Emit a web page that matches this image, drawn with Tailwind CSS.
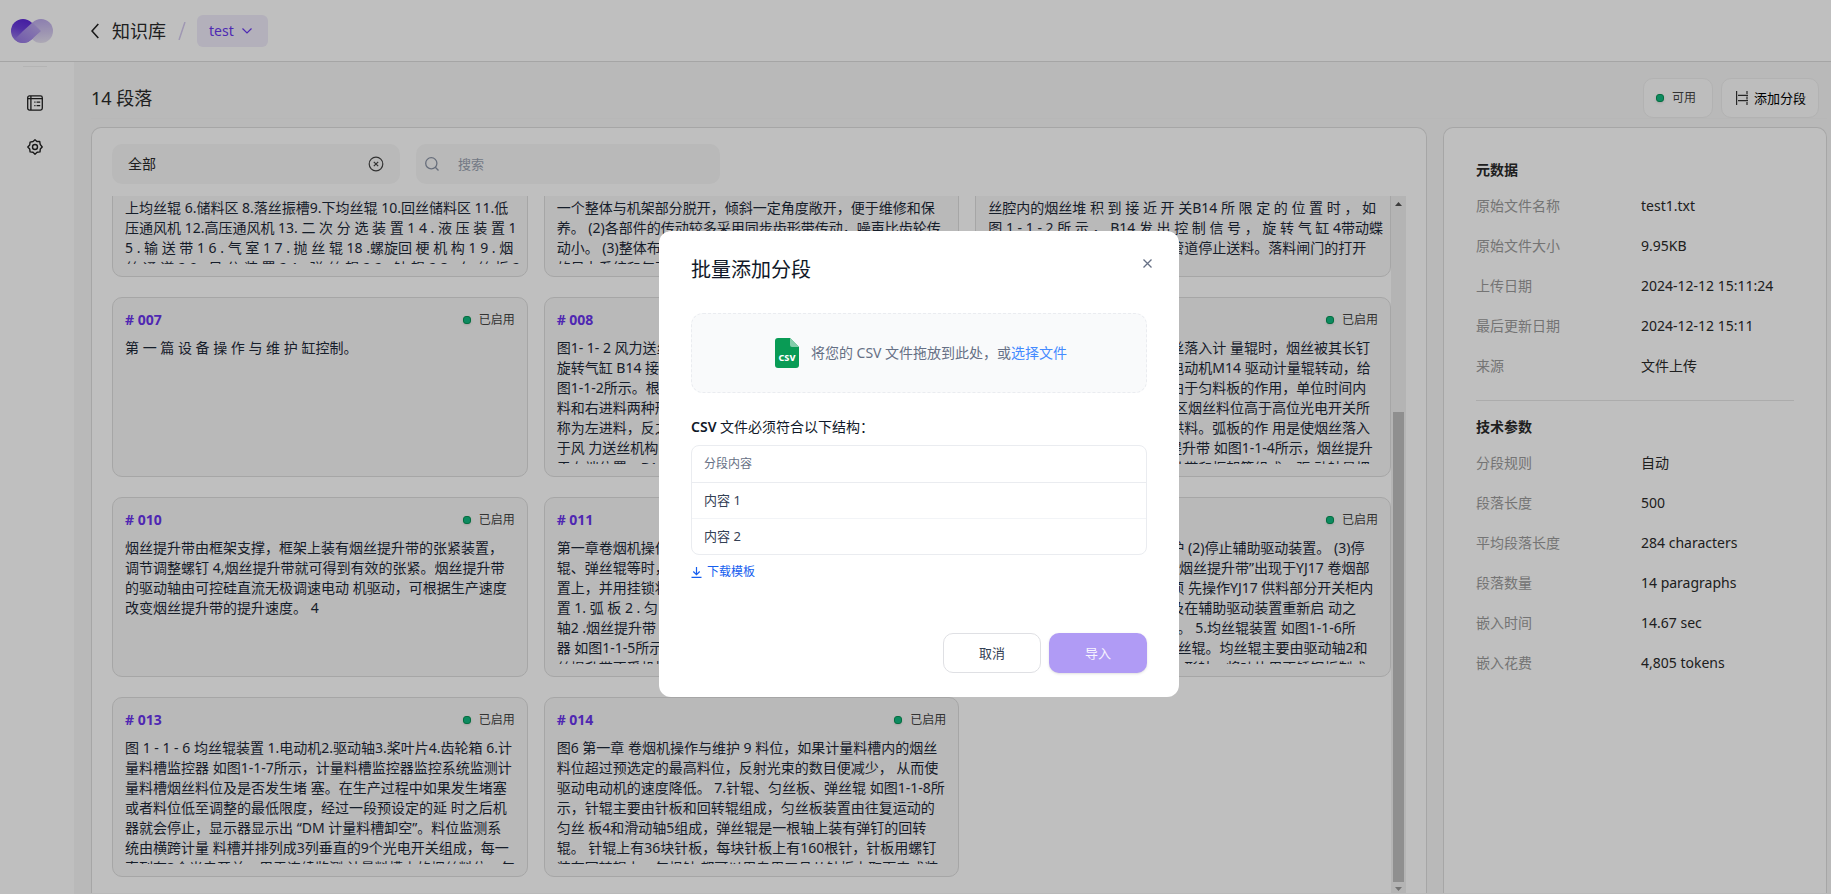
<!DOCTYPE html>
<html lang="zh-CN">
<head>
    <meta charset="UTF-8">
    <meta name="viewport" content="width=device-width, initial-scale=1.0">
    <title>知识库 - test</title>
    <script src="https://cdn.jsdelivr.net/npm/@tailwindcss/browser@4"></script>
</head>
<body class="h-screen overflow-hidden flex flex-col bg-white text-[#2a2a2a] text-sm font-['Noto_Sans','Noto_Sans_CJK_SC',sans-serif]">
    <header class="h-[62px] shrink-0 flex items-center border-b border-[#dcdcdc] pl-[11px]">
        <svg class="w-[42px] h-6" viewBox="0 0 42 24">
            <defs>
                <linearGradient id="izq" x1="0.7" y1="0" x2="0.4" y2="1">
                    <stop offset="0" stop-color="#5a25d8"/><stop offset="0.45" stop-color="#6c3fdc"/><stop offset="1" stop-color="#9c80e6"/>
                </linearGradient>
                <linearGradient id="der" x1="0.4" y1="0" x2="0.5" y2="1">
                    <stop offset="0" stop-color="#bba9ea"/><stop offset="0.6" stop-color="#d3c8ee"/><stop offset="1" stop-color="#e6e1f1"/>
                </linearGradient>
                <linearGradient id="banda" x1="0" y1="1" x2="1" y2="0">
                    <stop offset="0" stop-color="#9474e4"/><stop offset="1" stop-color="#c0afec"/>
                </linearGradient>
            </defs>
            <circle cx="30" cy="12" r="12" fill="url(#der)"/>
            <circle cx="12" cy="12" r="12" fill="url(#izq)"/>
            <path d="M12 12 21.500 3.500 30 12 20.500 20.500A12 12 0 0 1 3.500 20.500z" fill="url(#banda)"/>
        </svg>
        <a href="#" class="ml-[38px] flex items-center gap-[13px] text-lg">
            <svg class="w-2 h-4" viewBox="0 0 8 16" fill="none" stroke="#222" stroke-width="1.6"><path d="M7.300 1 1 8l6.300 7"/></svg>
            <span>知识库</span>
        </a>
        <svg class="ml-3 w-2 h-[18px]" viewBox="0 0 8 18" stroke="#d5cbef" stroke-width="1.5"><path d="M7 0 1 18"/></svg>
        <button class="ml-[11px] h-8 px-3 rounded-md bg-[#efebfa] text-[#6938ef] flex items-center gap-2 w-[71px]">
            <span>test</span>
            <svg class="w-[10px] h-[6px] shrink-0" viewBox="0 0 10 6" fill="none" stroke="#6938ef" stroke-width="1.200"><path d="m.5.5 4.500 4.500L9.500.5"/></svg>
        </button>
    </header>

    <div class="flex-1 min-h-0 flex">
        <nav class="w-[74px] shrink-0 flex flex-col items-start pt-1">
            <div class="ml-[23px] w-6 h-px bg-[#f0f0f0]"></div>
            <a href="#" aria-label="段落" class="ml-[27px] mt-7">
                <svg class="w-4 h-4" viewBox="0 0 16 16" fill="none" stroke="#222" stroke-width="1.300">
                    <rect x=".7" y=".9" width="14.600" height="14.200" rx="1.800"/>
                    <path d="M3.900.9v14.200M.7 3.600h14.600M7.300 7.200h1.200M9.600 7.200h3.600M7.300 10.600h1.200M9.600 10.600h3.600"/>
                </svg>
            </a>
            <a href="#" aria-label="设置" class="ml-[27px] mt-7">
                <svg class="w-4 h-4" viewBox="0 0 16 16" fill="none" stroke="#222" stroke-width="1.400" stroke-linejoin="round">
                    <path d="M8 .8 9.900 2.500l2.800-.1.5 2.900L15.200 8l-1.900 2-.3 2.900-2.900.4L8 15.200l-2-1.900-2.900-.4-.4-2.900L.8 8l1.900-2 .4-2.900 3-.6z"/>
                    <circle cx="8" cy="8" r="2.500"/>
                </svg>
            </a>
        </nav>

        <main class="flex-1 min-w-0 bg-[#f7f7f7] pl-[17px] pr-1 pt-4 pb-px flex flex-col">
            <div class="h-[41px] shrink-0 flex items-start justify-between border-b border-[#f4f4f4] pr-2">
                <h1 class="text-lg leading-10">14 段落</h1>
                <div class="flex gap-2">
                    <div class="h-10 w-[70px] flex items-center gap-2 pl-3 rounded-[10px] border border-[#eee] bg-[#fcfcfc] text-xs text-[#444]">
                        <span class="size-2 rounded-[3px] bg-[#10b981] border border-[#079455] shadow-sm"></span>可用
                    </div>
                    <button class="h-10 w-[98px] flex items-center gap-[6px] pl-[14px] rounded-[10px] border border-[#eee] bg-[#fcfcfc] text-[13px] text-black whitespace-nowrap">
                        <svg class="w-3 h-[14px] shrink-0" viewBox="0 0 12 14" fill="none" stroke="#333" stroke-width="1.200"><path d="M.6 0v14M2 4.400h10M2 9.600h10M11 0v3M11 5.500v3M11 11v3"/></svg>
                        添加分段
                    </button>
                </div>
            </div>

            <div class="mt-2 flex-1 min-h-0 flex gap-4">
                <section class="flex-1 min-w-0 rounded-t-[10px] border border-b-0 border-[#dedede] bg-white px-5 pt-4 flex flex-col">
                    <div class="flex gap-4 shrink-0">
                        <div class="relative w-72">
                            <select aria-label="状态" class="appearance-none w-full h-10 rounded-[10px] bg-[#f7f7f7] px-4 text-sm text-[#2a2a2a]">
                                <option>全部</option>
                            </select>
                            <button aria-label="清除" class="absolute right-4 top-3">
                                <svg class="size-4" viewBox="0 0 16 16" fill="none" stroke="#444" stroke-width="1.200"><circle cx="8" cy="8" r="6.800"/><path d="m5.800 5.800 4.400 4.400M10.200 5.800l-4.400 4.400"/></svg>
                            </button>
                        </div>
                        <label class="flex items-center gap-[15px] w-[304px] h-10 rounded-[10px] bg-[#f7f7f7] pl-[9px]">
                            <svg class="size-[14px] shrink-0" viewBox="0 0 14 14" fill="none" stroke="#8a93a5" stroke-width="1.300"><circle cx="6.300" cy="6.300" r="5.600"/><path d="m10.300 10.300 3.200 3.200"/></svg>
                            <input type="text" aria-label="搜索" placeholder="搜索" class="flex-1 min-w-0 bg-transparent px-1 text-[13px] placeholder:text-[#9aa2b1] outline-none">
                        </label>
                    </div>
                    <div class="mt-3 flex-1 min-h-0 flex">
                        <div class="flex-1 min-w-0 overflow-hidden flex flex-col justify-end pb-4">
                            <div id="cards" class="shrink-0 grid grid-cols-3 gap-x-4 gap-y-5"></div>
                        </div>
                        <div class="w-[15px] shrink-0 bg-[#f1f1f1] flex flex-col items-center">
                            <svg class="mt-[6px] w-[7px] h-1" viewBox="0 0 7 4" fill="#505050"><path d="M0 4 3.500 0 7 4z"/></svg>
                            <div class="flex-1"></div>
                            <div class="w-[11px] h-[470px] bg-[#bfbfbf]"></div>
                            <svg class="mt-[5px] mb-[2px] w-[7px] h-1" viewBox="0 0 7 4" fill="#999"><path d="M0 0h7L3.500 4z"/></svg>
                        </div>
                    </div>
                </section>

                <aside class="w-96 shrink-0 rounded-t-[10px] border border-b-0 border-[#dedede] bg-white px-8 pt-8">
                    <h2 class="font-bold leading-5">元数据</h2>
                    <dl id="meta" class="mt-4 grid grid-cols-[165px_1fr] gap-y-5 leading-5"></dl>
                    <hr class="mt-6 border-[#e6e6e6]">
                    <h2 class="mt-4 font-bold leading-5">技术参数</h2>
                    <dl id="tech" class="mt-4 grid grid-cols-[165px_1fr] gap-y-5 leading-5"></dl>
                </aside>
            </div>
        </main>
    </div>

    <div class="fixed inset-0 bg-black/25 flex items-center justify-center pl-[7px] pt-[34px]">
        <div role="dialog" aria-labelledby="dialogTitle" class="relative w-[520px] rounded-xl bg-white px-8 pt-6 pb-6 text-[#101828]">
            <h2 id="dialogTitle" class="text-xl leading-[30px]">批量添加分段</h2>
            <button aria-label="关闭" class="absolute right-6 top-6 size-4 flex items-center justify-center">
                <svg class="size-[9px]" viewBox="0 0 9 9" stroke="#667085" stroke-width="1.300"><path d="m.5.500 8 8M8.500.5l-8 8"/></svg>
            </button>
            <div class="mt-7 h-20 pl-1 flex items-center justify-center gap-3 rounded-xl border border-dashed border-[#eaecf0] bg-[#f9fafb] text-[#667085]">
                <svg class="w-6 h-[30px]" viewBox="0 0 24 30">
                    <path d="M3 0h12l9 9v18a3 3 0 0 1-3 3H3a3 3 0 0 1-3-3V3a3 3 0 0 1 3-3z" fill="#099b55"/>
                    <path d="M15 0l9 9h-7a2 2 0 0 1-2-2z" fill="#84cdaa"/>
                    <text x="12" y="22.500" text-anchor="middle" font-size="9" font-weight="800" fill="#fff">CSV</text>
                </svg>
                <p>将您的 CSV 文件拖放到此处，或<label for="csvFile" class="text-[#448aff] cursor-pointer">选择文件</label></p>
                <input type="file" id="csvFile" accept=".csv" class="hidden">
            </div>
            <p class="mt-6 leading-5"><span class="font-semibold">CSV</span> 文件必须符合以下结构：</p>
            <div class="mt-2 rounded-lg border border-[#eaecf0] overflow-hidden">
                <table class="w-full text-left">
                    <thead>
                        <tr class="h-9 border-b border-[#eaecf0]"><th class="px-3 text-xs font-normal text-[#667085]">分段内容</th></tr>
                    </thead>
                    <tbody class="text-[13px] text-[#344054]">
                        <tr class="h-9 border-b border-[#f2f4f7]"><td class="px-3">内容 1</td></tr>
                        <tr class="h-9"><td class="px-3">内容 2</td></tr>
                    </tbody>
                </table>
            </div>
            <a href="#" class="mt-2 flex items-center gap-[5px] text-xs leading-[18px] text-[#155eef]">
                <svg class="w-[11px] h-[11px]" viewBox="0 0 11 11" fill="none" stroke="#155eef" stroke-width="1.200"><path d="M5.500 0v7.500M2.300 4.500l3.200 3.200 3.200-3.200M.5 10.300h10"/></svg>
                下载模板
            </a>
            <div class="mt-[52px] flex justify-end gap-2 text-[13px]">
                <button class="w-[98px] h-10 rounded-[10px] border border-[#dfe0e4] text-[#344054]">取消</button>
                <button class="w-[98px] h-10 rounded-[10px] bg-[#b09bf5] text-white/90 shadow-sm">导入</button>
            </div>
        </div>
    </div>

    <script>
        // la primera fila queda cortada por el scroll: sin cabecera visible
        const cards = [
            [null, `上均丝辊 6.储料区 8.落丝振槽9.下均丝辊 10.回丝储料区 11.低
压通风机 12.高压通风机 13. 二 次 分 选 装 置 1 4 . 液 压 装 置 1
5 . 输 送 带 1 6 . 气 室 1 7 . 抛 丝 辊 18 .螺旋回 梗 机 构 1 9 . 烟
丝 通 道 2 0 . 风 分 装 置 2 1 . 弹 丝 辊 2 2 . 针 辊 2 3 . 匀 丝 板 2`],
            [null, `一个整体与机架部分脱开，倾斜一定角度敞开，便于维修和保
养。 (2)各部件的传动较多采用同步齿形带传动，噪声比齿轮传
动小。 (3)整体布局合理，结构紧凑，采用了独立
的风力系统和气动系统`],
            [null, `丝腔内的烟丝堆 积 到 接 近 开 关B14 所 限 定 的 位 置 时 ， 如
图 1 - 1 - 2 所 示 ， B14 发 出 控 制 信 号 ， 旋 转 气 缸 4带动蝶
阀的转动，使风力送丝机构的管道停止送料。落料闸门的打开`],
            ['007', `第 一 篇 设 备 操 作 与 维 护 缸控制。`],
            ['008', `图1- 1- 2 风力送丝机构
旋转气缸 B14 接近开关
图1-1-2所示。根据进料
料和右进料两种形式，
称为左进料，反之则为
于风 力送丝机构的闸门
于右端位置，B14发出`],
            ['009', `由烟丝提升带输送来的全部烟丝落入计 量辊时，烟丝被其长钉
带着向下运动。计量辊由主驱电动机M14 驱动计量辊转动，给
出所需数量的均匀的烟丝流。由于匀料板的作用，单位时间内
送出烟丝的数量恒定。当 储料区烟丝料位高于高位光电开关所
设定的高度时，提升带将停止供料。弧板的作 用是使烟丝落入
均匀的料槽内。4.计量料槽的提升带 如图1-1-4所示，烟丝提升
带主要由驱动轴和张紧轴，提升带和框架等组成。驱 动轴是把`],
            ['010', `烟丝提升带由框架支撑，框架上装有烟丝提升带的张紧装置，
调节调整螺钉 4,烟丝提升带就可得到有效的张紧。烟丝提升带
的驱动轴由可控硅直流无极调速电动 机驱动，可根据生产速度
改变烟丝提升带的提升速度。 4`],
            ['011', `第一章卷烟机操作与维护
辊、弹丝辊等时，必须
置上，并用挂锁将其锁
置 1. 弧 板 2 . 匀 料 板
轴2 .烟丝提升带 3.料位
器 如图1-1-5所示，当烟
丝提升带不受机械`],
            ['012', `烟丝提升带停止运行后进行维护 (2)停止辅助驱动装置。 (3)停
止供丝并且切断电源，当信号“ 烟丝提升带”出现于YJ17 卷烟部
分的操作面板的显示屏之上必须 先操作YJ17 供料部分开关柜内
的主开关使其处于断开位置以及在辅助驱动装置重新启 动之
前，检查安全防护罩是否关好  。 5.均丝辊装置 如图1-1-6所
示，它主要由电动机和一对匀  丝辊。均丝辊主要由驱动轴2和
和桨叶片等组成，驱动轴为正方形轴。将叶片用不锈钢板制成`],
            ['013', `图 1 - 1 - 6 均丝辊装置 1.电动机2.驱动轴3.桨叶片4.齿轮箱 6.计
量料槽监控器 如图1-1-7所示，计量料槽监控器监控系统监测计
量料槽烟丝料位及是否发生堵 塞。在生产过程中如果发生堵塞
或者料位低至调整的最低限度，经过一段预设定的延 时之后机
器就会停止，显示器显示出 “DM 计量料槽卸空”。料位监测系
统由横跨计量 料槽并排列成3列垂直的9个光电开关组成，每一
直列有3个光电开关，用于连续监测 计量料槽内的烟丝料位。每`],
            ['014', `图6 第一章 卷烟机操作与维护 9 料位，如果计量料槽内的烟丝
料位超过预选定的最高料位，反射光束的数目便减少， 从而使
驱动电动机的速度降低。 7.针辊、匀丝板、弹丝辊 如图1-1-8所
示，针辊主要由针板和回转辊组成，匀丝板装置由往复运动的
匀丝 板4和滑动轴5组成，弹丝辊是一根轴上装有弹钉的回转
辊。 针辊上有36块针板，每块针板上有160根针，针板用螺钉
装在回转辊上。每根针 都可以用专用工具从针板上取下来或装`]
        ]
        const meta = [['原始文件名称', 'test1.txt'], ['原始文件大小', '9.95KB'], ['上传日期', '2024-12-12 15:11:24'], ['最后更新日期', '2024-12-12 15:11'], ['来源', '文件上传']]
        const tech = [['分段规则', '自动'], ['段落长度', '500'], ['平均段落长度', '284 characters'], ['段落数量', '14 paragraphs'], ['嵌入时间', '14.67 sec'], ['嵌入花费', '4,805 tokens']]

        function pintarCard([num, texto]) {
            const cabecera = num ? `
                <div class="flex items-center justify-between h-5">
                    <h3 class="font-bold text-[#6a34ee]"># ${num}</h3>
                    <span class="flex items-center gap-2 text-xs text-[#444]"><i class="size-2 rounded-[3px] bg-[#10b981] border border-[#079455] shadow-sm"></i>已启用</span>
                </div>` : ''
            const espacio = num ? 'mt-2' : 'mt-[88px]'
            return `<article class="h-[180px] min-w-0 flex flex-col rounded-[10px] border border-[#dedede] bg-[#f7f7f7] p-3">${cabecera}
                <p class="${espacio} flex-1 min-h-0 overflow-x-visible overflow-y-clip whitespace-pre leading-5 text-[#1d2939]">${texto}</p></article>`
        }
        function pintarLista(id, filas) {
            document.getElementById(id).innerHTML = filas.map(([k, v]) => `<dt class="text-[#9b9b9b]">${k}</dt><dd>${v}</dd>`).join('')
        }
        document.getElementById('cards').innerHTML = cards.map(pintarCard).join('')
        pintarLista('meta', meta)
        pintarLista('tech', tech)
    </script>
</body>
</html>
